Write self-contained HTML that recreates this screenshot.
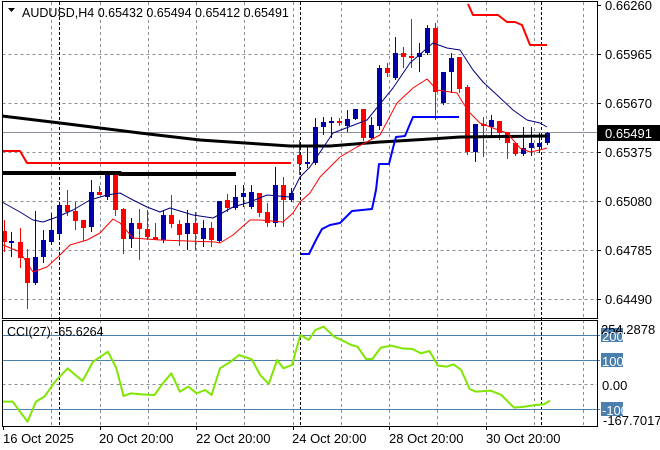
<!DOCTYPE html>
<html><head><meta charset="utf-8"><style>
html,body{margin:0;padding:0;background:#fff;width:660px;height:450px;overflow:hidden}
svg{display:block}
text{font-family:"Liberation Sans",sans-serif;font-size:13px;fill:#000}
</style></head><body>
<svg id="s" width="660" height="450" xmlns="http://www.w3.org/2000/svg">
<rect width="660" height="450" fill="#fff"/>
<g stroke="#8a9099" stroke-width="1" stroke-dasharray="3,3" fill="none">
<path d="M2.5 54.5H597M2.5 103.5H597M2.5 152.5H597M2.5 201.5H597M2.5 250.5H597M2.5 299.5H597M2.5 384.5H597"/>
<path d="M51.5 2V426M100.5 2V426M148.5 2V426M196.5 2V426M244.5 2V426M293.5 2V426M341.5 2V426M389.5 2V426M437.5 2V426M486.5 2V426M534.5 2V426M583.5 2V426"/>
</g>
<g stroke="#000" stroke-width="1" stroke-dasharray="3,2"><path d="M59.5 2V426M300.5 2V426M541.5 2V426"/></g>
<path d="M2 132.5H597" stroke="#8a9099"/>
<g stroke="#4a7fae" stroke-width="1"><path d="M2 335.5H600M2 360.5H600M2 409.5H600"/></g>
<g id="cand"></g>
<g fill="none" stroke-linejoin="round">
<polyline stroke="#000" stroke-width="3" points="2,116 60,123 100,128 140,133 200,140 245,143 290,146 330,146 380,142 430,139 460,137 547,136"/>
<polyline stroke="#000" stroke-width="4" points="2,173 120,173 120,174 236,174"/>
<polyline stroke="#f00" stroke-width="2" points="2,151 20,151 27,163 291,163"/>
<polyline stroke="#f00" stroke-width="2" points="468,4 473,15 498,15 507,22 515,22 522,25 530,45 547,45"/>
<polyline stroke="#0000ff" stroke-width="2" points="301,254 309,254 313,246 317,238 322,229 330,225 340,223 352,211 372,209 376,190 379,164 389,164 393,148 396,137 405,136 410,124 413,117 459,117"/>
<polyline stroke="#000080" stroke-width="1" points="2,202 20,212 33,220 43,222 57,217 73,210 90,200 107,195 120,193 133,200 147,207 160,212 170,208 193,215 213,218 233,207 250,202 267,195 290,197 300,177 310,167 333,133 367,120 393,88 410,63 433,43 447,48 460,50 473,70 483,82 497,95 513,110 527,120 540,123 547,127"/>
<polyline stroke="#f00" stroke-width="1" points="3,245 20,252 33,272 47,267 60,255 70,245 87,240 100,233 113,219 120,223 133,238 160,240 215,242 220,243 233,235 250,220 260,220 283,222 293,213 300,202 310,193 320,177 340,157 357,147 380,135 397,103 413,88 427,79 437,90 457,93 463,103 470,113 480,123 493,128 507,133 520,148 530,152 540,150 547,148"/>
</g>
<g transform="translate(0,225) scale(0.4231,0.33333)">
<polyline fill="none" stroke="#7fe600" stroke-width="2" vector-effect="non-scaling-stroke" stroke-linejoin="round" points="7,530 30,530 65,590 85,530 105,515 130,470 160,430 195,468 220,410 255,380 275,430 292,513 310,505 335,508 365,510 385,475 405,445 425,500 445,485 465,505 485,495 500,510 520,430 545,410 565,390 595,403 615,450 635,477 655,405 670,430 690,420 710,330 730,345 745,315 765,305 790,335 815,350 830,360 845,365 865,402 880,402 900,368 925,362 950,370 975,372 995,385 1015,378 1035,422 1055,425 1072,418 1090,435 1110,492 1125,500 1160,497 1185,510 1215,548 1240,545 1265,540 1285,538 1300,527"/>
</g>
<g stroke="#000" fill="none"><rect x="2.5" y="1.5" width="595" height="317"/><rect x="2.5" y="320.5" width="595" height="106"/></g>
<g stroke="#000"><path d="M597 5.5h4M597 54.5h4M597 103.5h4M597 152.5h4M597 201.5h4M597 250.5h4M597 299.5h4M3.5 426v4M100.5 426v4M196.5 426v4M293.5 426v4M389.5 426v4M486.5 426v4"/></g>
<path d="M8 8h7l-3.5 4z" fill="#000"/>
<text x="22" y="17" style="font-size:12.5px">AUDUSD,H4  0.65432 0.65494 0.65412 0.65491</text>
<g>
<text x="605" y="10">0.66260</text>
<text x="605" y="59">0.65965</text>
<text x="605" y="108">0.65670</text>
<rect x="598" y="125" width="62" height="16" fill="#000"/>
<text x="605" y="138" style="fill:#fff">0.65491</text>
<text x="605" y="157">0.65375</text>
<text x="605" y="206">0.65080</text>
<text x="605" y="255">0.64785</text>
<text x="605" y="304">0.64490</text>
</g>
<text x="7" y="336" style="font-size:12.5px">CCI(27) -65.6264</text>
<rect x="601" y="328" width="22" height="14" fill="#4a7fae"/>
<rect x="601" y="353" width="22" height="14" fill="#4a7fae"/>
<rect x="601" y="402" width="22" height="14" fill="#4a7fae"/>
<text x="601" y="334">254.2878</text>
<text x="602" y="341" style="fill:#fff">200</text>
<text x="602" y="366" style="fill:#fff">100</text>
<text x="602" y="390">0.00</text>
<text x="602" y="415" style="fill:#fff">-100</text>
<text x="603" y="425">-167.7017</text>
<text x="3" y="443">16 Oct 2025</text>
<text x="99" y="443">20 Oct 20:00</text>
<text x="196" y="443">22 Oct 20:00</text>
<text x="292" y="443">24 Oct 20:00</text>
<text x="389" y="443">28 Oct 20:00</text>
<text x="486" y="443">30 Oct 20:00</text>
</svg>
<script>
var C=[[4,231,242,220,252,'r'],[11,241,243,232,257,'b'],[20,242,258,228,268,'r'],[27,258,283,249,309,'r'],[35,257,283,211,285,'b'],[43,240,257,230,263,'b'],[51,230,242,213,245,'b'],[59,205,234,205,237,'b'],[67,205,212,190,216,'r'],[75,211,221,202,230,'r'],[83,220,228,220,241,'r'],[91,192,227,180,232,'b'],[99,192,195,186,195,'r'],[107,175,197,173,200,'b'],[115,175,210,175,216,'r'],[123,209,239,208,254,'r'],[131,223,239,218,248,'b'],[139,223,229,209,260,'r'],[147,229,237,210,240,'r'],[155,237,240,223,240,'r'],[163,215,240,210,243,'b'],[171,215,224,195,228,'r'],[179,224,235,220,246,'r'],[187,223,234,210,250,'b'],[195,223,234,212,250,'r'],[203,228,239,220,247,'b'],[211,228,240,222,247,'r'],[219,201,241,201,243,'b'],[227,200,208,194,212,'r'],[235,197,208,185,210,'b'],[243,193,197,185,207,'b'],[251,192,207,185,209,'b'],[259,193,213,193,217,'r'],[267,212,223,203,227,'r'],[275,185,223,167,227,'b'],[283,185,200,177,227,'r'],[291,193,200,188,202,'b'],[299,155,164,140,175,'r'],[307,162,164,147,168,'b'],[315,127,163,118,165,'b'],[323,122,127,117,135,'b'],[331,121,123,117,138,'b'],[339,121,123,118,126,'r'],[347,119,126,110,132,'b'],[355,109,119,109,120,'b'],[363,109,138,109,141,'r'],[371,125,138,117,140,'b'],[379,68,126,65,130,'b'],[387,68,73,63,77,'r'],[395,53,78,37,80,'b'],[403,53,57,47,68,'r'],[411,56,58,19,68,'r'],[419,53,57,43,72,'b'],[427,28,53,25,55,'b'],[435,28,92,23,120,'r'],[443,72,103,72,105,'b'],[451,58,72,53,93,'b'],[459,57,89,57,93,'r'],[467,87,152,85,155,'r'],[475,124,152,124,162,'b'],[483,124,126,117,157,'r'],[491,120,127,115,138,'b'],[499,121,133,121,140,'r'],[507,132,143,132,159,'r'],[515,143,154,143,156,'r'],[523,148,154,127,156,'b'],[531,143,148,127,156,'b'],[539,143,147,133,153,'b'],[547,133,143,132,145,'b']];
var g=document.getElementById('cand'),h='';
C.forEach(function(c){var col=c[5]=='r'?'#ff0000':'#0000a8';
h+='<line x1="'+(c[0]+0.5)+'" x2="'+(c[0]+0.5)+'" y1="'+c[3]+'" y2="'+c[4]+'" stroke="'+col+'"/>';
h+='<rect x="'+(c[0]-2)+'" y="'+c[1]+'" width="5" height="'+Math.max(1,c[2]-c[1])+'" fill="'+col+'"/>';});
g.innerHTML=h;
</script>
</body></html>
